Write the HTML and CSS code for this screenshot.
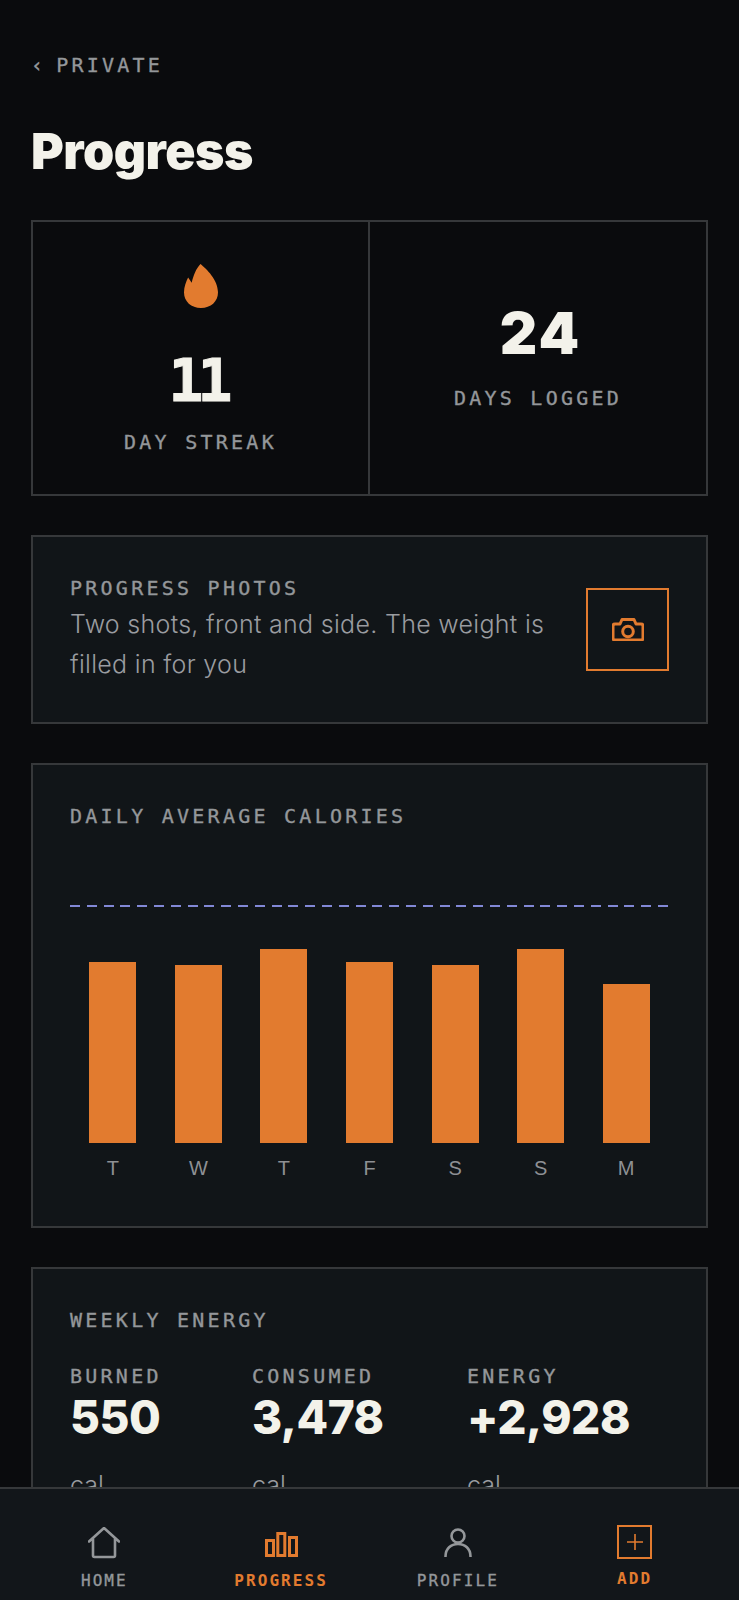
FILE: index.html
```html
<!DOCTYPE html>
<html lang="en">
<head>
<meta charset="utf-8">
<title>Progress</title>
<link rel="stylesheet" href="styles.css">
</head>
<body>
<div class="screen">
  <main class="content">
    <a class="back"><span class="chev">‹</span>PRIVATE</a>
    <h1 class="title">Progress</h1>

    <section class="stats">
      <div class="stat">
        <svg class="flame" viewBox="0 0 33 42" preserveAspectRatio="none"><path d="M16 0C22 5 33 15 33 27C33 36 26 42 16.5 42C7 42 0 36 0 27C0 22 2 17 4 13L7.5 18C9 11 12 4 16 0Z"/></svg>
        <div class="num mono-one">11</div>
        <div class="label">DAY STREAK</div>
      </div>
      <div class="stat stat-mid">
        <div class="num">24</div>
        <div class="label">DAYS LOGGED</div>
      </div>
    </section>

    <section class="card photos">
      <div class="photos-text">
        <div class="label">PROGRESS PHOTOS</div>
        <p class="body">Two shots, front and side. The weight is filled in for you</p>
      </div>
      <div class="cam">
        <svg viewBox="0 0 32 23" width="32" height="23"><path d="M3 6H8L10 1.5H22L24 6H29Q31 6 31 8V20Q31 22 29 22H3Q1 22 1 20V8Q1 6 3 6Z" class="stroke"/><circle cx="16" cy="13.5" r="5.3" class="stroke"/></svg>
      </div>
    </section>

    <section class="card chart-card">
      <div class="label">DAILY AVERAGE CALORIES</div>
      <div class="goal"></div>
      <div class="chart">
        <div class="col"><div class="bar b1"></div><span>T</span></div>
        <div class="col"><div class="bar b2"></div><span>W</span></div>
        <div class="col"><div class="bar b3"></div><span>T</span></div>
        <div class="col"><div class="bar b1"></div><span>F</span></div>
        <div class="col"><div class="bar b2"></div><span>S</span></div>
        <div class="col"><div class="bar b3"></div><span>S</span></div>
        <div class="col"><div class="bar b4"></div><span>M</span></div>
      </div>
    </section>

    <section class="card energy">
      <div class="label">WEEKLY ENERGY</div>
      <div class="energy-row">
        <div><div class="label">BURNED</div><div class="value">550</div><div class="unit">cal</div></div>
        <div><div class="label">CONSUMED</div><div class="value">3,478</div><div class="unit">cal</div></div>
        <div><div class="label">ENERGY</div><div class="value">+2,928</div><div class="unit">cal</div></div>
      </div>
    </section>
  </main>

  <nav class="nav">
    <a class="tab">
      <svg viewBox="0 0 32 32" width="32" height="32"><path class="s2" d="M1 14.5L16 1L31 14.5M5 12V28.5Q5 30 6.5 30H25.5Q27 30 27 28.5V12"/></svg>
      <span>HOME</span>
    </a>
    <a class="tab on raised">
      <svg viewBox="0 0 33 25" width="33" height="25"><path class="s3" d="M1.5 8.5H8.5V23.5H1.5ZM12.8 1.5H19.8V23.5H12.8ZM24.5 5.5H31.5V23.5H24.5Z"/></svg>
      <span>PROGRESS</span>
    </a>
    <a class="tab raised">
      <svg viewBox="0 0 28 29" width="28" height="29"><circle class="s2" cx="14" cy="8" r="6.5"/><path class="s2" d="M1.5 28.5C1.5 20.5 7 16 14 16S26.5 20.5 26.5 28.5"/></svg>
      <span>PROFILE</span>
    </a>
    <a class="tab on add">
      <div class="addbox"><svg viewBox="0 0 16 16" width="16" height="16"><path class="s1" d="M8 0V16M0 8H16"/></svg></div>
      <span>ADD</span>
    </a>
  </nav>
</div>
</body>
</html>
```
FILE: styles.css
```css
* { box-sizing: border-box; }
html, body { margin: 0; padding: 0; background: #0a0b0d; }
.screen { position: relative; width: 739px; height: 1600px; overflow: hidden; }
.content { padding: 52px 31px 0; }
.back, .label, .tab span {
  font-family: "DejaVu Sans Mono", monospace;
  -webkit-text-stroke: 0.35px currentColor;
  color: #94979a;
}
.back { display: block; font-size: 20px; line-height: 26px; letter-spacing: 3.2px; }
.chev { margin-right: 10px; }
.title {
  margin: 43px 0 0;
  font-family: Inter, sans-serif;
  font-weight: 900;
  font-size: 50px;
  line-height: 60px;
  letter-spacing: -0.5px;
  color: #f3f2ea;
}
.stats { display: flex; margin-top: 39px; height: 276px; border: 2px solid #36383a; }
.stat { flex: 0 0 335px; display: flex; flex-direction: column; align-items: center; padding-top: 42px; }
.stat-mid { flex: 1; border-left: 2px solid #36383a; padding-top: 76px; }
.stat-mid .num { padding-left: 5px; }
.flame { width: 34px; height: 44px; fill: #e27b2f; flex: none; }
.num {
  font-family: Inter, sans-serif;
  font-weight: 900;
  font-size: 58px;
  line-height: 70px;
  letter-spacing: 2px;
  color: #f3f2ea;
}
.mono-one {
  font-family: "DejaVu Sans Mono", monospace;
  font-weight: 700;
  letter-spacing: -6px;
  -webkit-text-stroke: 1px currentColor;
  margin: 38px 0 -4px;
  padding-right: 6px;
}
.stat .label { margin-top: 17px; }
.card { margin-top: 39px; border: 2px solid #36383a; background: #111518; padding: 38px 37px 0; }
.label { font-size: 20px; line-height: 26px; letter-spacing: 3.25px; }
.photos { height: 189px; display: flex; justify-content: space-between; }
.photos-text { width: 490px; }
.body {
  margin: 3px 0 0;
  font-family: Inter, sans-serif;
  font-weight: 300;
  font-size: 25px;
  line-height: 40px;
  letter-spacing: 0.3px;
  color: #9a9ca0;
}
.cam { width: 83px; height: 83px; margin-top: 13px; border: 2px solid #e27b2f; display: flex; align-items: center; justify-content: center; }
.stroke { fill: none; stroke: #e27b2f; stroke-width: 3; stroke-linejoin: round; }
.chart-card { height: 465px; }
.goal {
  margin-top: 76px;
  width: 603px;
  height: 2px;
  background: repeating-linear-gradient(90deg, #8288d6 0 10px, transparent 10px 16.8px);
}
.chart { display: grid; grid-template-columns: repeat(7, 1fr); height: 240px; margin-top: 33px; }
.col { display: flex; flex-direction: column; align-items: center; justify-content: flex-end; }
.col span { font-family: "Liberation Sans", sans-serif; font-size: 20px; line-height: 24px; margin-top: 13px; color: #8e9094; }
.bar { width: 47px; background: #e27b2f; }
.b1 { height: 181px; }
.b2 { height: 178px; }
.b3 { height: 194px; }
.b4 { height: 159px; }
.energy { height: 400px; }
.energy-row { display: grid; grid-template-columns: 182px 215px auto; margin-top: 30px; }
.value {
  font-family: Inter, sans-serif;
  font-weight: 800;
  font-size: 46px;
  line-height: 52px;
  letter-spacing: -0.5px;
  margin-top: 2px;
  color: #f3f2ea;
}
.unit { font-family: Inter, sans-serif; font-weight: 300; font-size: 25px; line-height: 30px; margin-top: 27px; color: #9a9ca0; }
.nav {
  position: absolute;
  left: 0; right: 0; bottom: 0;
  height: 113px;
  display: grid;
  grid-template-columns: repeat(4, 1fr);
  padding: 36px 16px 0;
  background: #12161a;
  border-top: 2px solid #36383a;
}
.tab { display: flex; flex-direction: column; align-items: center; justify-content: flex-end; height: 66px; }
.tab span { font-size: 16px; line-height: 20px; letter-spacing: 2.1px; margin-top: 12px; }
.tab svg { display: block; }
.raised span { margin-top: 14px; }
.s2 { fill: none; stroke: #94979a; stroke-width: 2.6; stroke-linejoin: round; stroke-linecap: round; }
.s3 { fill: none; stroke: #e27b2f; stroke-width: 3; }
.s1 { fill: none; stroke: #e27b2f; stroke-width: 1.6; }
.tab.on span { color: #e27b2f; font-weight: 700; -webkit-text-stroke: 0; }
.addbox { width: 35px; height: 35px; border: 2px solid #e27b2f; display: flex; align-items: center; justify-content: center; }
.add span { margin-top: 10px; margin-bottom: 2px; }
```
